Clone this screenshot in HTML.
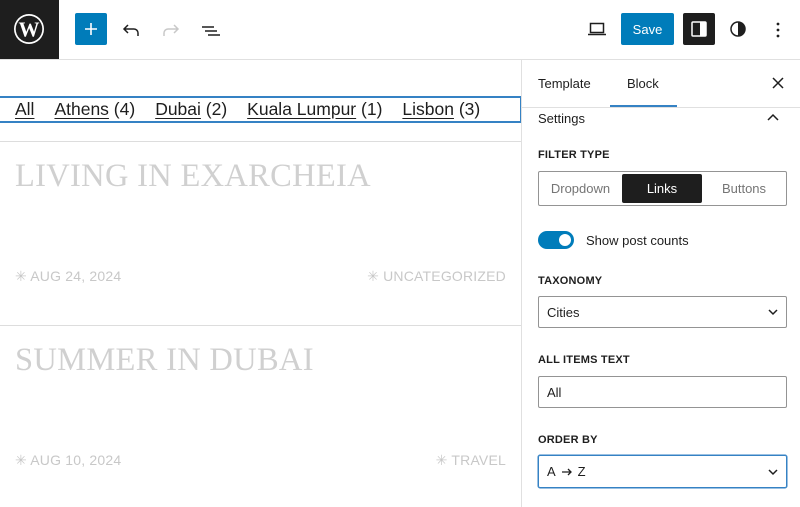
<!DOCTYPE html>
<html><head><meta charset="utf-8"><style>
*{box-sizing:border-box;margin:0;padding:0}
body{width:800px;height:507px;overflow:hidden;background:#fff;font-family:"Liberation Sans",sans-serif;color:#1e1e1e;position:relative}
.a{position:absolute}
.lbl{font-size:11px;font-weight:bold;letter-spacing:.2px;text-transform:uppercase}
.field{border:1px solid #949494;border-radius:2px;font-size:13px;padding-left:8px;display:flex;align-items:center}
.meta{font-size:14px;color:#c8c8c8;letter-spacing:.2px}
.title{font-family:"Liberation Serif",serif;font-size:32.5px;color:#d0d0d0;letter-spacing:.3px}
.links span{margin-right:20px}
.links u{text-underline-offset:3px}
</style></head><body>
<div class="a" style="left:0;top:0;width:59px;height:59px;background:#1e1e1e"></div>
<svg class="a" style="left:13px;top:13px" width="32" height="32" viewBox="0 0 32 32"><circle cx="16" cy="16" r="15" fill="#fff"/><circle cx="16" cy="16" r="13.3" fill="#1e1e1e"/><text x="16" y="23.5" font-family="Liberation Serif" font-weight="bold" font-size="21" fill="#fff" text-anchor="middle">W</text></svg>
<div class="a" style="left:0;top:59px;width:800px;height:1px;background:#e0e0e0"></div>
<div class="a" style="left:75px;top:13px;width:32px;height:32px;background:#007cba;border-radius:2px"></div>
<svg class="a" style="left:83px;top:21px" width="16" height="16"><path d="M8 2v12M2 8h12" stroke="#fff" stroke-width="1.6"/></svg>
<svg class="a" style="left:119px;top:19px" width="24" height="24" viewBox="0 0 24 24"><path d="M19 17v-3a4 4 0 0 0-4-4H6M9 6l-4 4 4 4" fill="none" stroke="#1e1e1e" stroke-width="1.5"/></svg>
<svg class="a" style="left:159px;top:19px" width="24" height="24" viewBox="0 0 24 24"><path d="M5 17v-3a4 4 0 0 1 4-4h9M15 6l4 4-4 4" fill="none" stroke="#c8c8c8" stroke-width="1.5"/></svg>
<svg class="a" style="left:199px;top:19px" width="24" height="24" viewBox="0 0 24 24"><path d="M3 8h12M6 12h12M9 16h12" stroke="#1e1e1e" stroke-width="1.5"/></svg>
<svg class="a" style="left:585px;top:17px" width="24" height="24" viewBox="0 0 24 24"><path d="M5.5 6.5h13v9h-13zM3 17.5h18" fill="none" stroke="#1e1e1e" stroke-width="1.5"/></svg>
<div class="a" style="left:621px;top:13px;width:53px;height:32px;background:#007cba;border-radius:2px;color:#fff;font-size:13px;display:flex;align-items:center;justify-content:center">Save</div>
<div class="a" style="left:683px;top:13px;width:32px;height:32px;background:#1e1e1e;border-radius:2px"></div>
<svg class="a" style="left:687px;top:17px" width="24" height="24" viewBox="0 0 24 24"><rect x="5" y="5" width="14" height="14" rx="1" fill="none" stroke="#fff" stroke-width="1.5"/><rect x="13" y="5" width="6" height="14" fill="#fff"/></svg>
<svg class="a" style="left:727px;top:18px" width="22" height="22" viewBox="0 0 22 22"><circle cx="11" cy="11" r="7" fill="none" stroke="#1e1e1e" stroke-width="1.5"/><path d="M11 4a7 7 0 0 1 0 14z" fill="#1e1e1e"/></svg>
<svg class="a" style="left:772px;top:19px" width="12" height="22"><circle cx="6" cy="5" r="1.4" fill="#1e1e1e"/><circle cx="6" cy="11" r="1.4" fill="#1e1e1e"/><circle cx="6" cy="17" r="1.4" fill="#1e1e1e"/></svg>
<div class="a" style="left:0;top:96px;width:522px;height:27px;border:2px solid #3582c4;border-left:none"></div>
<div class="a links" style="left:15px;top:99px;font-size:17.5px;white-space:nowrap;color:#1e1e1e"><span><u>All</u></span><span><u>Athens</u> (4)</span><span><u>Dubai</u> (2)</span><span><u>Kuala Lumpur</u> (1)</span><span><u>Lisbon</u> (3)</span></div>
<div class="a" style="left:0;top:141px;width:521px;height:1px;background:#ddd"></div>
<div class="a title" style="left:15px;top:158px">LIVING IN EXARCHEIA</div>
<div class="a meta" style="left:15px;top:268px">✳ AUG 24, 2024</div>
<div class="a meta" style="right:294px;top:268px">✳ UNCATEGORIZED</div>
<div class="a" style="left:0;top:325px;width:521px;height:1px;background:#ddd"></div>
<div class="a title" style="left:15px;top:342px">SUMMER IN DUBAI</div>
<div class="a meta" style="left:15px;top:452px">✳ AUG 10, 2024</div>
<div class="a meta" style="right:294px;top:452px">✳ TRAVEL</div>
<div class="a" style="left:521px;top:60px;width:1px;height:447px;background:#e0e0e0"></div>
<div class="a" style="left:522px;top:107px;width:278px;height:1px;background:#e0e0e0"></div>
<div class="a" style="left:538px;top:76px;font-size:13px;font-weight:500">Template</div>
<div class="a" style="left:627px;top:76px;font-size:13px;font-weight:500">Block</div>
<div class="a" style="left:610px;top:105px;width:67px;height:2px;background:#3582c4"></div>
<svg class="a" style="left:771px;top:76px" width="14" height="14"><path d="M2 2l10 10M12 2L2 12" stroke="#1e1e1e" stroke-width="1.5"/></svg>
<div class="a" style="left:538px;top:111px;font-size:13px;font-weight:500">Settings</div>
<svg class="a" style="left:766px;top:112px" width="14" height="10"><path d="M2 8l5-5 5 5" fill="none" stroke="#1e1e1e" stroke-width="1.5"/></svg>
<div class="a lbl" style="left:538px;top:149px">Filter type</div>
<div class="a" style="left:538px;top:171px;width:249px;height:35px;border:1px solid #949494;border-radius:2px;font-size:13px">
<div class="a" style="left:0;top:0;width:83px;height:33px;display:flex;align-items:center;justify-content:center;color:#757575">Dropdown</div>
<div class="a" style="left:83px;top:2px;width:80px;height:29px;background:#1e1e1e;color:#fff;display:flex;align-items:center;justify-content:center;border-radius:2px">Links</div>
<div class="a" style="left:163px;top:0;width:84px;height:33px;display:flex;align-items:center;justify-content:center;color:#757575">Buttons</div></div>
<div class="a" style="left:538px;top:231px;width:36px;height:18px;background:#007cba;border-radius:9px"></div>
<div class="a" style="left:559px;top:234px;width:12px;height:12px;background:#fff;border-radius:50%"></div>
<div class="a" style="left:586px;top:233px;font-size:13px">Show post counts</div>
<div class="a lbl" style="left:538px;top:275px">Taxonomy</div>
<div class="a field" style="left:538px;top:296px;width:249px;height:32px">Cities</div>
<svg class="a" style="left:767px;top:308px" width="12" height="8"><path d="M2 2l4 4 4-4" fill="none" stroke="#1e1e1e" stroke-width="1.5"/></svg>
<div class="a lbl" style="left:538px;top:354px">All items text</div>
<div class="a field" style="left:538px;top:376px;width:249px;height:32px">All</div>
<div class="a lbl" style="left:538px;top:434px">Order by</div>
<div class="a field" style="left:538px;top:455px;width:249px;height:33px;border-color:#3582c4;box-shadow:0 0 0 .5px #3582c4">A <svg width="16" height="10" style="margin:0 3px"><path d="M3 5h9M9 2l3 3-3 3" fill="none" stroke="#1e1e1e" stroke-width="1.3"/></svg> Z</div>
<svg class="a" style="left:767px;top:468px" width="12" height="8"><path d="M2 2l4 4 4-4" fill="none" stroke="#1e1e1e" stroke-width="1.5"/></svg>
</body></html>
